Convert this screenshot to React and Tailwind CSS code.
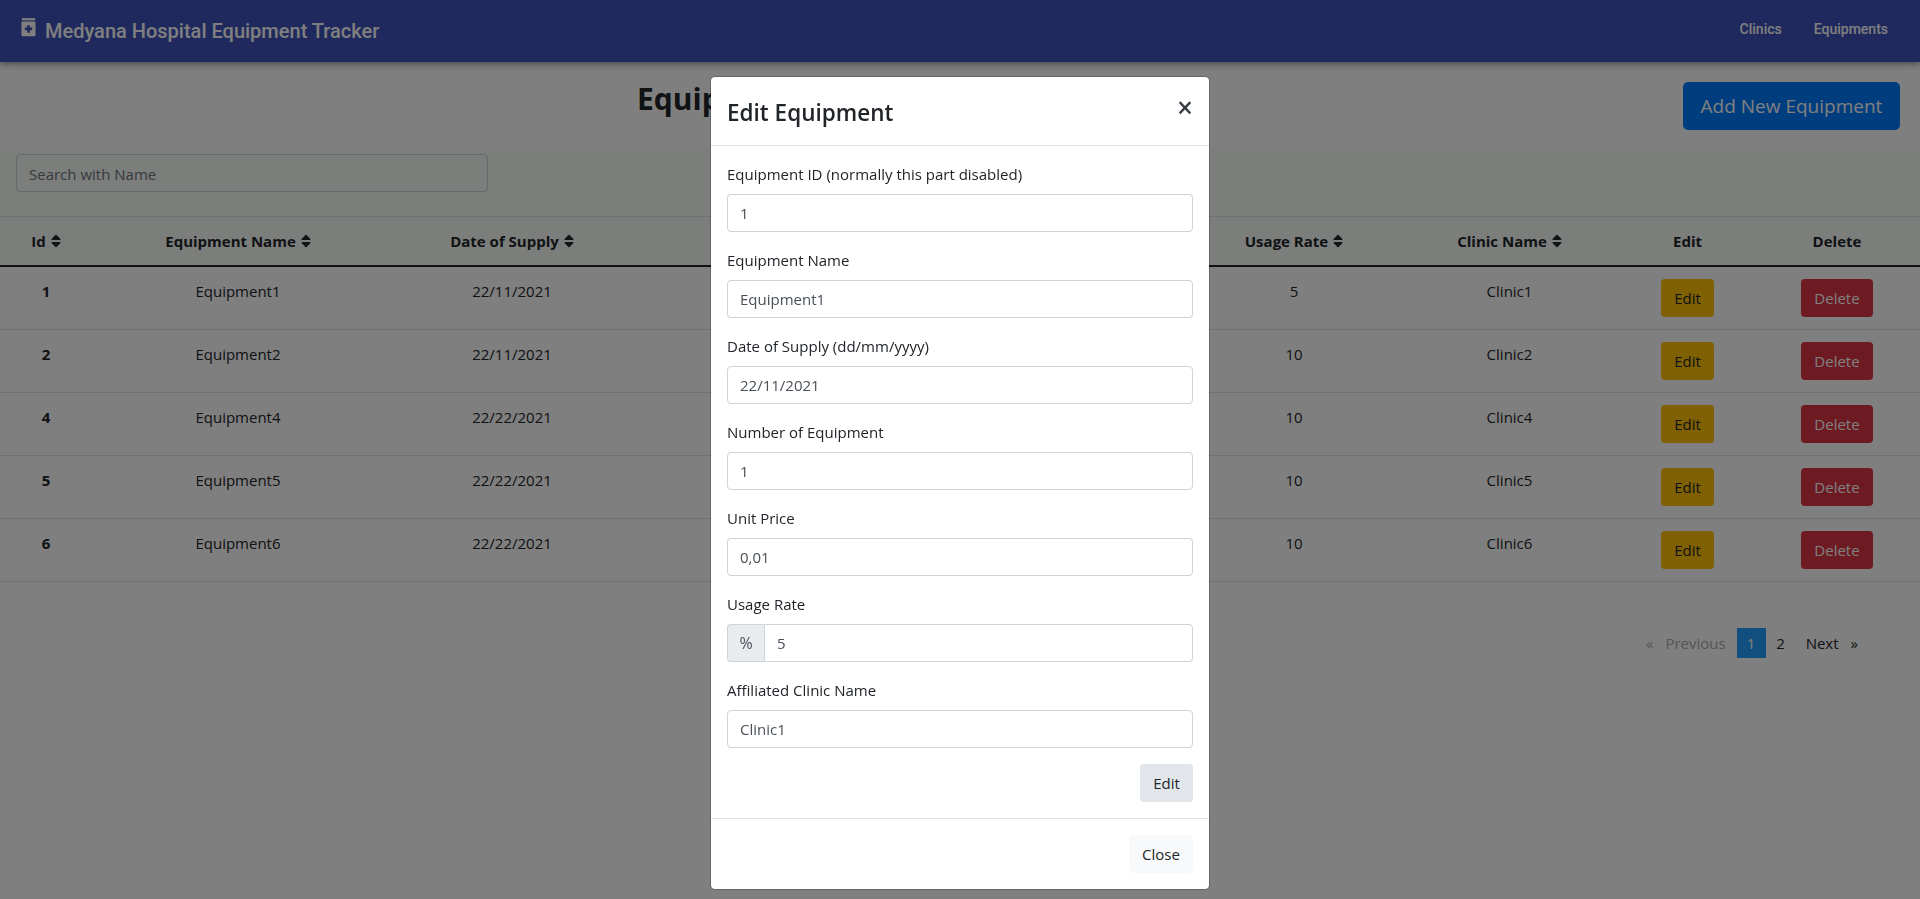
import React from "react";
import { FaSort } from "react-icons/fa";

const rows = [
  ["1", "Equipment1", "22/11/2021", "1", "0,01", "5", "Clinic1"],
  ["2", "Equipment2", "22/11/2021", "1", "0,01", "10", "Clinic2"],
  ["4", "Equipment4", "22/22/2021", "1", "0,01", "10", "Clinic4"],
  ["5", "Equipment5", "22/22/2021", "1", "0,01", "10", "Clinic5"],
  ["6", "Equipment6", "22/22/2021", "1", "0,01", "10", "Clinic6"],
];
const heads = ["Id", "Equipment Name", "Date of Supply", "Number of Equipment", "Unit Price", "Usage Rate", "Clinic Name"];

function Field({ label, value, prefix }) {
  return (
    <div className="mb-4">
      <label className="block h-6 mb-2 leading-6 text-[#212529]">{label}</label>
      <div className="flex h-[38px]">
        {prefix && (
          <span className="flex w-[37px] shrink-0 items-center justify-center rounded-l border border-r-0 border-[#ced4da] bg-[#e9ecef] text-[16px] text-[#495057]">{prefix}</span>
        )}
        <input
          readOnly
          value={value}
          className={`h-[38px] w-full border border-[#ced4da] bg-white px-3 text-[#495057] outline-none ${prefix ? "rounded-r" : "rounded"}`}
        />
      </div>
    </div>
  );
}

function BottleIcon() {
  return (
    <svg width="15" height="19" viewBox="0 0 16 20" className="mt-[-8px] shrink-0" fill="#fff">
      <rect x="1" y="0" width="14" height="2.4" />
      <path
        fillRule="evenodd"
        d="M1.5 3.6h13a1 1 0 0 1 1 1v13.4a1.4 1.4 0 0 1-1.4 1.4H1.9A1.4 1.4 0 0 1 .5 18V4.6a1 1 0 0 1 1-1ZM6.6 7.5v2.6H4v2.8h2.6v2.6h2.8v-2.6H12v-2.8H9.4V7.5H6.6Z"
      />
    </svg>
  );
}

export default function App() {
  return (
    <div className="relative h-[899px] overflow-hidden bg-white font-['Open_Sans',sans-serif] text-[15px] text-[#212529]">
      <header className="relative z-10 flex h-[62px] items-center bg-[#3e53bb] pl-[21px] pr-[32px] shadow-[0_2px_4px_-1px_rgba(0,0,0,0.2),0_4px_5px_0_rgba(0,0,0,0.14),0_1px_10px_0_rgba(0,0,0,0.12)]">
        <BottleIcon />
        <span className="ml-[9px] font-['Roboto',sans-serif] text-[20px] font-medium leading-[24px] text-white">
          Medyana Hospital Equipment Tracker
        </span>
        <nav className="ml-auto flex gap-[32px] font-['Roboto',sans-serif] text-[14px] font-medium text-white mt-[-3px]">
          <a>Clinics</a>
          <a>Equipments</a>
        </nav>
      </header>

      <div className="flex h-[84px] items-start justify-between pl-[637px] pr-[20px] pt-5">
        <h2 className="mt-[-7px] text-[30px] font-bold leading-[48px] text-[#212529]">Equipments</h2>
        <button className="h-12 w-[217px] rounded-[5px] bg-[#007bff] text-[19px] text-white">Add New Equipment</button>
      </div>

      <div className="bg-[#f9fcf9]">
        <div className="h-[70px] px-4 pt-2">
          <input
            readOnly
            placeholder="Search with Name"
            className="h-[38px] w-[472px] rounded border border-[#ced4da] bg-transparent px-3 pt-[2px] text-[#495057] outline-none placeholder:text-[#6c757d]"
          />
        </div>
        <table className="w-[1920px] table-fixed border-separate border-spacing-0 text-center">
          <colgroup>
            <col className="w-[92px]" />
            <col className="w-[292px]" />
            <col className="w-[256px]" />
            <col className="w-[402px]" />
            <col className="w-[148px]" />
            <col className="w-[208px]" />
            <col className="w-[223px]" />
            <col className="w-[133px]" />
            <col className="w-[166px]" />
          </colgroup>
          <thead>
            <tr>
              {heads.map((h) => (
                <th key={h} className="h-[51px] border-t border-b-2 border-t-[#dee2e6] border-b-[#212529] p-0 font-bold leading-6">
                  <span className="inline-flex items-center justify-center gap-[5px]">
                    {h}
                    <FaSort className="h-[16px] w-[10px]" />
                  </span>
                </th>
              ))}
              <th className="border-t border-b-2 border-t-[#dee2e6] border-b-[#212529] p-0 font-bold leading-6">Edit</th>
              <th className="border-t border-b-2 border-t-[#dee2e6] border-b-[#212529] p-0 font-bold leading-6">Delete</th>
            </tr>
          </thead>
          <tbody className="bg-white">
            {rows.map((r) => (
              <tr key={r[0]}>
                {r.map((c, i) => (
                  <td key={i} className={`h-[63px] border-b border-[#dee2e6] px-0 py-3 align-top leading-6 ${i === 0 ? "font-bold" : ""}`}>
                    {c}
                  </td>
                ))}
                <td className="border-b border-[#dee2e6] px-0 py-3 align-top">
                  <button className="h-[38px] w-[53px] rounded bg-[#ffc107] text-[#212529]">Edit</button>
                </td>
                <td className="border-b border-[#dee2e6] px-0 py-3 align-top">
                  <button className="h-[38px] w-[72px] rounded bg-[#dc3545] text-white">Delete</button>
                </td>
              </tr>
            ))}
          </tbody>
        </table>
      </div>

      <div className="flex h-[30px] justify-end pr-[62px] mt-[46px] leading-[30px]">
        <span className="mr-[12px] text-[#aaaaaa]">«</span>
        <span className="mr-[11px] text-[#aaaaaa]">Previous</span>
        <span className="w-[29px] bg-[#22a0fd] text-center text-white">1</span>
        <span className="w-[30px] text-center text-[#212529]">2</span>
        <span className="ml-[10px] text-[#212529]">Next</span>
        <span className="ml-[12px] text-[#212529]">»</span>
      </div>

      <div className="fixed inset-0 z-20 flex justify-center bg-black/50 pt-[76px]">
        <div className="h-[814px] w-[500px] rounded-[5px] border border-black/20 bg-white bg-clip-padding">
          <div className="flex h-[69px] items-start justify-between border-b border-[#dee2e6] px-4 pt-[18px]">
            <h4 className="text-[22.5px] font-semibold leading-9 text-[#212529]">Edit Equipment</h4>
            <span className="mt-[-6px] text-[28px] font-semibold leading-9 text-[#3a3f44]">×</span>
          </div>
          <div className="h-[673px] border-b border-[#dee2e6] p-4">
            <Field label="Equipment ID (normally this part disabled)" value="1" />
            <Field label="Equipment Name" value="Equipment1" />
            <Field label="Date of Supply (dd/mm/yyyy)" value="22/11/2021" />
            <Field label="Number of Equipment" value="1" />
            <Field label="Unit Price" value="0,01" />
            <Field label="Usage Rate" value="5" prefix="%" />
            <Field label="Affiliated Clinic Name" value="Clinic1" />
            <div className="flex justify-end">
              <button className="h-[38px] w-[53px] rounded bg-[#e2e6ea] text-[#212529]">Edit</button>
            </div>
          </div>
          <div className="flex justify-end p-4">
            <button className="h-[38px] w-[64px] rounded bg-[#f8f9fa] text-[#212529]">Close</button>
          </div>
        </div>
      </div>
    </div>
  );
}
